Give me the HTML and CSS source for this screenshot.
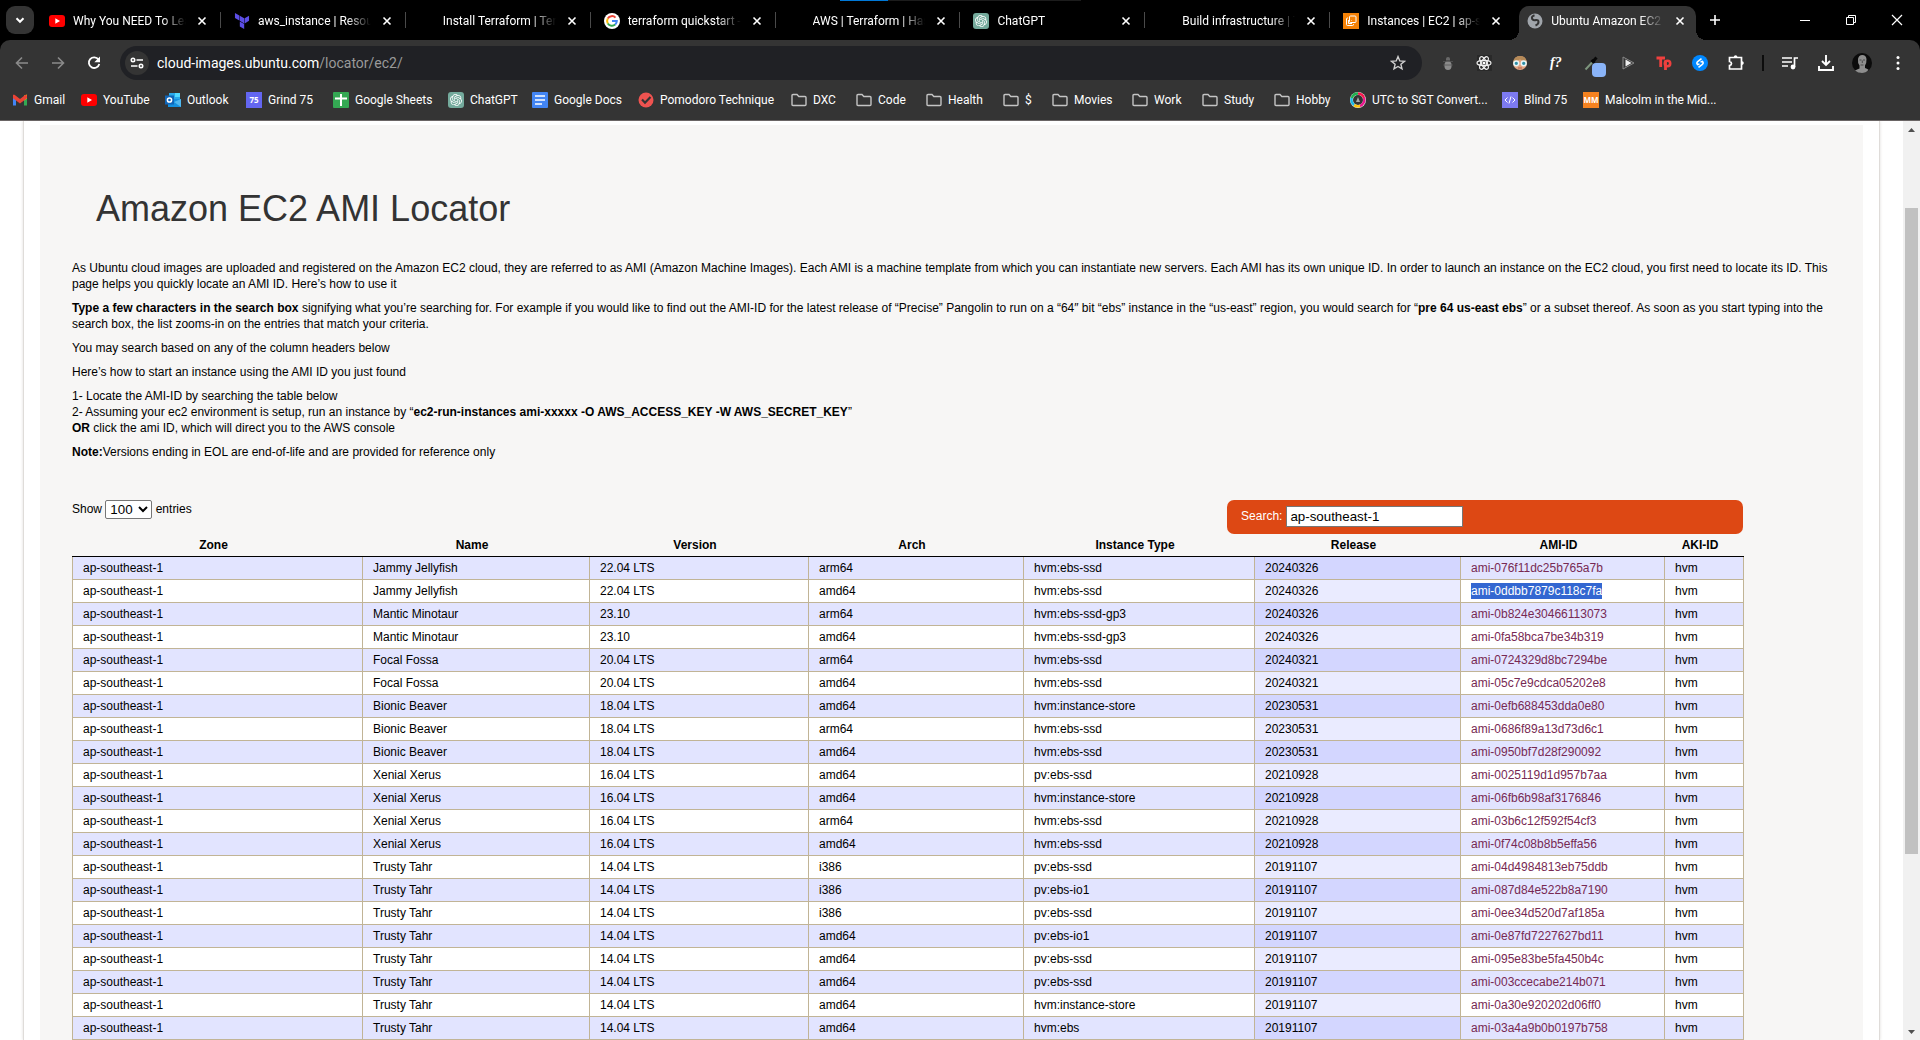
FILE: index.html
```html
<!DOCTYPE html>
<html lang="en">
<head>
<meta charset="utf-8">
<title>Ubuntu Amazon EC2 AMI Locator</title>
<link rel="stylesheet" href="styles.css">
</head>
<body>
<svg class="sprite" aria-hidden="true">
  <symbol id="close" viewBox="0 0 16 16"><path d="M4.5 4.5l7 7M11.500 4.500l-7 7" fill="none" stroke="currentColor" stroke-width="1.600"/></symbol>
  <symbol id="youtube" viewBox="0 0 16 16"><rect y="2" width="16" height="12" rx="3" fill="#f00"/><path d="M6.300 5.300v5.400L11 8z" fill="#fff"/></symbol>
  <symbol id="folder" viewBox="0 0 16 16"><path d="M1 3.500q0-1 1-1h4l1.800 2H14q1 0 1 1v7q0 1-1 1H2q-1 0-1-1z" fill="none" stroke="#c4c4c4" stroke-width="1.400"/></symbol>
  <symbol id="chatgpt" viewBox="0 0 32 32"><rect width="32" height="32" rx="6" fill="#74aa9c"/><path transform="translate(4 4)" fill="#fff" d="M22.2819 9.8211a5.9847 5.9847 0 0 0-.5157-4.9108 6.0462 6.0462 0 0 0-6.5098-2.9A6.0651 6.0651 0 0 0 4.9807 4.1818a5.9847 5.9847 0 0 0-3.9977 2.9 6.0462 6.0462 0 0 0 .7427 7.0966 5.98 5.98 0 0 0 .511 4.9107 6.051 6.051 0 0 0 6.5146 2.9001A5.9847 5.9847 0 0 0 13.2599 24a6.0557 6.0557 0 0 0 5.7718-4.2058 5.9894 5.9894 0 0 0 3.9977-2.9001 6.0557 6.0557 0 0 0-.7475-7.0729zm-9.022 12.6081a4.4755 4.4755 0 0 1-2.8764-1.0408l.1419-.0804 4.7783-2.7582a.7948.7948 0 0 0 .3927-.6813v-6.7369l2.02 1.1686a.071.071 0 0 1 .038.052v5.5826a4.504 4.504 0 0 1-4.4945 4.4944zm-9.6607-4.1254a4.4708 4.4708 0 0 1-.5346-3.0137l.142.0852 4.783 2.7582a.7712.7712 0 0 0 .7806 0l5.8428-3.3685v2.3324a.0804.0804 0 0 1-.0332.0615L9.74 19.9502a4.4992 4.4992 0 0 1-6.1408-1.6464zM2.3408 7.8956a4.485 4.485 0 0 1 2.3655-1.9728V11.6a.7664.7664 0 0 0 .3879.6765l5.8144 3.3543-2.0201 1.1685a.0757.0757 0 0 1-.071 0l-4.8303-2.7865A4.504 4.504 0 0 1 2.3408 7.872zm16.5963 3.8558L13.1038 8.364 15.1192 7.2a.0757.0757 0 0 1 .071 0l4.8303 2.7913a4.4944 4.4944 0 0 1-.6765 8.1042v-5.6772a.79.79 0 0 0-.407-.667zm2.0107-3.0231l-.142-.0852-4.7735-2.7818a.7759.7759 0 0 0-.7854 0L9.409 9.2297V6.8974a.0662.0662 0 0 1 .0284-.0615l4.8303-2.7866a4.4992 4.4992 0 0 1 6.6802 4.66zM8.3065 12.863l-2.02-1.1638a.0804.0804 0 0 1-.038-.0567V6.0742a4.4992 4.4992 0 0 1 7.3757-3.4537l-.142.0805L8.704 5.459a.7948.7948 0 0 0-.3927.6813zm1.0976-2.3654l2.602-1.4998 2.6069 1.4998v2.9994l-2.5974 1.4997-2.6067-1.4997Z"/></symbol>
</svg>

<header class="browser">
  <div class="top-strip"></div>
  <div class="tabstrip">
    <button class="tab-search" aria-label="Search tabs"><svg viewBox="0 0 16 16"><path d="M4.500 6.300L8 9.800l3.500-3.500" fill="none" stroke="#fff" stroke-width="2"/></svg></button>
    <div class="tabs">
      <div class="tab"><svg class="icon"><use href="#youtube"/></svg><span class="tab-title">Why You NEED To Learn Terraform</span><button class="tab-close" aria-label="Close tab"><svg class="icon"><use href="#close"/></svg></button></div>
      <div class="tab"><svg class="icon" viewBox="0 0 24 24"><path fill="#5c4ee5" d="M1.440 0v7.575l6.561 3.790V3.787zm21.120 4.227l-6.561 3.791v7.574l6.560-3.787zM8.720 4.230v7.575l6.561 3.787V8.018zm0 8.405v7.575L15.280 24v-7.578z"/></svg><span class="tab-title">aws_instance | Resources</span><button class="tab-close" aria-label="Close tab"><svg class="icon"><use href="#close"/></svg></button></div>
      <div class="tab"><span class="icon"></span><span class="tab-title">Install Terraform | Terraform</span><button class="tab-close" aria-label="Close tab"><svg class="icon"><use href="#close"/></svg></button></div>
      <div class="tab"><svg class="icon" viewBox="0 0 16 16"><circle cx="8" cy="8" r="8" fill="#fff"/><g fill="none" stroke-width="2"><path d="M11.500 4.600A4.900 4.900 0 0 0 3.800 5.500" stroke="#ea4335"/><path d="M3.800 5.500a4.900 4.900 0 0 0 0 5" stroke="#fbbc05"/><path d="M3.800 10.500a4.900 4.900 0 0 0 7.400 1.100" stroke="#34a853"/><path d="M11.200 11.600A4.900 4.900 0 0 0 12.800 8H8" stroke="#4285f4"/></g></svg><span class="tab-title">terraform quickstart - Google</span><button class="tab-close" aria-label="Close tab"><svg class="icon"><use href="#close"/></svg></button></div>
      <div class="tab"><span class="icon"></span><span class="tab-title">AWS | Terraform | HashiCorp</span><button class="tab-close" aria-label="Close tab"><svg class="icon"><use href="#close"/></svg></button></div>
      <div class="tab"><svg class="icon"><use href="#chatgpt"/></svg><span class="tab-title">ChatGPT</span><button class="tab-close" aria-label="Close tab"><svg class="icon"><use href="#close"/></svg></button></div>
      <div class="tab"><span class="icon"></span><span class="tab-title">Build infrastructure | Terraform</span><button class="tab-close" aria-label="Close tab"><svg class="icon"><use href="#close"/></svg></button></div>
      <div class="tab"><svg class="icon" viewBox="0 0 16 16"><rect width="16" height="16" fill="#f58206"/><g fill="none" stroke="#fff"><rect x="6.500" y="3" width="6.500" height="6.500" rx="1"/><path d="M5 5H4.500q-1 0-1 1v5.500q0 1 1 1H9.500q1 0 1-1V11M8.500 7.500v-.5M5.500 7v3.500h3.500"/></g></svg><span class="tab-title">Instances | EC2 | ap-southeast</span><button class="tab-close" aria-label="Close tab"><svg class="icon"><use href="#close"/></svg></button></div>
      <div class="tab active"><svg class="icon" viewBox="0 0 16 16"><circle cx="8" cy="8" r="7.500" fill="#a0a5ab"/><path d="M7.500 2.200Q4 3.500 5.200 6q1.500 1.700 3.800 1 2.500-.3 2.500 2T8.500 12.500" fill="none" stroke="#343434" stroke-width="2"/></svg><span class="tab-title">Ubuntu Amazon EC2 AMI Finder</span><button class="tab-close" aria-label="Close tab"><svg class="icon"><use href="#close"/></svg></button></div>
    </div>
    <button class="new-tab" aria-label="New tab"><svg class="icon" viewBox="0 0 16 16"><path d="M8 3v10M3 8h10" stroke="#fff" stroke-width="1.600"/></svg></button>
    <div class="window-buttons">
      <button aria-label="Minimize"><svg class="icon" viewBox="0 0 16 16"><path d="M3 8.500h10" stroke="#fff"/></svg></button>
      <button aria-label="Restore"><svg class="icon" viewBox="0 0 16 16"><path d="M3.500 5.500h7v7h-7zM5.500 5.500v-2h7v7h-2" fill="none" stroke="#fff"/></svg></button>
      <button aria-label="Close"><svg class="icon" viewBox="0 0 16 16"><path d="M3 3l10 10M13 3L3 13" stroke="#fff" stroke-width="1.200"/></svg></button>
    </div>
  </div>

  <div class="toolbar">
    <button class="tool" aria-label="Back"><svg class="icon" viewBox="0 0 16 16"><path d="M14 8H3M8 2.500L2.500 8 8 13.500" fill="none" stroke="#8a8a8a" stroke-width="1.600"/></svg></button>
    <button class="tool" aria-label="Forward"><svg class="icon" viewBox="0 0 16 16"><path d="M2 8h11M8 2.500L13.500 8 8 13.500" fill="none" stroke="#8a8a8a" stroke-width="1.600"/></svg></button>
    <button class="tool" aria-label="Reload"><svg class="icon" viewBox="0 0 16 16"><path d="M12.500 4.600A5.300 5.300 0 1 0 13.300 9" fill="none" stroke="#fff" stroke-width="1.800"/><path d="M14 1.500v5.700H8.300z" fill="#fff"/></svg></button>
    <div class="omnibox">
      <button class="site-info" aria-label="Site information"><svg class="icon" viewBox="0 0 16 16"><g fill="none" stroke="#fff" stroke-width="1.600"><circle cx="4" cy="5" r="1.700"/><path d="M7.500 5H14M2 11h6.500"/><circle cx="12" cy="11" r="1.700"/></g></svg></button>
      <a class="url" href="#">cloud-images.ubuntu.com<span>/locator/ec2/</span></a>
      <button class="star" aria-label="Bookmark this tab"><svg class="icon" viewBox="0 0 16 16"><path d="M8 1.600l1.800 4.300 4.700.4-3.600 3 1.100 4.600L8 11.500l-4 2.400 1.100-4.600-3.600-3 4.700-.4z" fill="none" stroke="#d0d0d0" stroke-width="1.400"/></svg></button>
    </div>
    <div class="extensions">
      <button class="tool" aria-label="Bug extension"><svg class="icon" viewBox="0 0 16 16"><path d="M6 4q0-2 2-2t2 2v1.500H6z" fill="#686868"/><ellipse cx="8" cy="10.500" rx="3.600" ry="4.500" fill="#8b8b8b"/><path d="M3 6.500h10M3 10h10" stroke="#555" stroke-width=".8"/></svg></button>
      <button class="tool" aria-label="React tools"><svg class="icon" viewBox="0 0 16 16"><rect x="1" width="15" height="16" fill="#292929"/><g fill="none" stroke="#eee" stroke-width="1.200"><ellipse cx="8" cy="8" rx="7" ry="2.700"/><ellipse cx="8" cy="8" rx="7" ry="2.700" transform="rotate(60 8 8)"/><ellipse cx="8" cy="8" rx="7" ry="2.700" transform="rotate(120 8 8)"/></g><circle cx="8" cy="8" r="1.500" fill="#fff"/></svg></button>
      <button class="tool" aria-label="Glasses extension"><svg class="icon" viewBox="0 0 16 16"><circle cx="8" cy="8" r="7" fill="#e3a481"/><path d="M1.300 7Q2 1 8 1t6.700 6L8 4.500z" fill="#b58a58"/><path d="M6 13h4" stroke="#aa5d50"/><g fill="#2f8ea5" stroke="#e7f5f7" stroke-width="1.500"><circle cx="4.300" cy="8.300" r="2.400"/><circle cx="11.700" cy="8.300" r="2.400"/></g></svg></button>
      <button class="tool" aria-label="WhatFont"><svg class="icon" viewBox="0 0 16 16"><text x="2" y="12" class="glyph-serif">f?</text></svg></button>
      <button class="tool picker" aria-label="Color picker"><svg class="icon" viewBox="0 0 16 16"><path d="M1.500 14.500L9 6.500" stroke="#7d967d" stroke-width="2"/><path d="M7.500 5l3 3M9 6.500L12.500 2.500" stroke="#080808" stroke-width="3"/></svg><span class="picker-badge"></span></button>
      <button class="tool" aria-label="Player extension"><svg class="icon" viewBox="0 0 16 16"><path d="M3 2l11 6-11 6z" fill="none" stroke="#888"/><path d="M5.500 4.500l6 3.500-6 3.500z" fill="#eee"/></svg></button>
      <button class="tool" aria-label="Toptal"><svg class="icon" viewBox="0 0 16 16"><path d="M.5 3H9M4.700 3v9M9.500 5.500V15" fill="none" stroke="#f0403e" stroke-width="2.800"/><circle cx="11.500" cy="8.500" r="2.700" fill="none" stroke="#f0403e" stroke-width="2.600"/></svg></button>
      <button class="tool" aria-label="Shazam"><svg class="icon" viewBox="0 0 16 16"><circle cx="8" cy="8" r="8" fill="#08f"/><path d="M9.500 3.700L6 6.300Q4 8 5.500 9.500L7.500 9M6.500 12.300L10 9.700q2-1.700.5-3.200L8.500 7" fill="none" stroke="#fff" stroke-width="1.600"/></svg></button>
      <button class="tool" aria-label="Extensions"><svg class="icon" viewBox="0 0 16 16"><path d="M1.500 2.500h12v11.500h-12v-3.500q2-.3 2-2t-2-2z" fill="none" stroke="#fff" stroke-width="1.700"/><path d="M5.800 2a1.800 1.800 0 0 1 3.600 0zM14 6.300a1.800 1.800 0 0 1 0 3.600z" fill="#fff"/></svg></button>
      <span class="divider"></span>
      <button class="tool" aria-label="Media controls"><svg class="icon" viewBox="0 0 16 16"><path d="M0 3h10M0 7h10M0 11h6M12.500 12V3H16" fill="none" stroke="#fff" stroke-width="1.700"/><circle cx="11" cy="12" r="2.400" fill="#fff"/></svg></button>
      <button class="tool" aria-label="Downloads"><svg class="icon" viewBox="0 0 16 16"><path d="M8 0v9M4 6l4 4 4-4M1 11v4h14v-4" fill="none" stroke="#fff" stroke-width="1.900"/></svg></button>
      <button class="tool" aria-label="Profile"><svg class="avatar" viewBox="0 0 20 20"><circle cx="10" cy="10" r="10" fill="#0b0b0b"/><path d="M3 17.500q3-1.500 4.500-2v-3Q5.500 10 6 6q.8-4 4.300-4 3.700 0 4.200 4 .2 4-1.500 6.500v2.500q2 .5 3.500 1.800Q14 20 10 20t-7-2.500z" fill="#8e8e8e"/><path d="M7.500 7h2M11 7h2M10.300 7.500v2.500M8.500 12h3" stroke="#4b4b4b"/></svg></button>
      <button class="tool" aria-label="Menu"><svg class="icon" viewBox="0 0 16 16"><g fill="#fff"><circle cx="8" cy="2.500" r="1.500"/><circle cx="8" cy="8" r="1.500"/><circle cx="8" cy="13.500" r="1.500"/></g></svg></button>
    </div>
  </div>

  <nav class="bookmarks" aria-label="Bookmarks">
    <a href="#"><svg class="icon" viewBox="0 0 16 16"><path d="M1 4v9.500h3V6z" fill="#4285f4"/><path d="M15 4v9.500h-3V6z" fill="#34a853"/><path d="M12 3.500l3-1v4l-3 2z" fill="#fbbc04"/><path d="M1 2.800v3.400L8 11.500l7-5.300V3.500l-1.500-.8L8 7 2.500 2.700z" fill="#ea4335"/></svg>Gmail</a>
    <a href="#"><svg class="icon"><use href="#youtube"/></svg>YouTube</a>
    <a href="#"><svg class="icon" viewBox="0 0 16 16"><path d="M4 1h11v7H4z" fill="#28a8ea"/><path d="M10 1h5v4h-5z" fill="#50d9ff"/><path d="M3 7h13v8H3z" fill="#1490df"/><path d="M16 7v8L9 10z" fill="#50b8f0"/><rect y="3.500" width="9" height="9" fill="#0f65b8"/><circle cx="4.500" cy="8" r="2.100" fill="none" stroke="#fff" stroke-width="1.500"/></svg>Outlook</a>
    <a href="#"><svg class="icon" viewBox="0 0 16 16"><rect width="16" height="16" fill="#6366f1"/><text x="8" y="11" class="glyph">75</text></svg>Grind 75</a>
    <a href="#"><svg class="icon" viewBox="0 0 16 16"><rect width="16" height="16" rx="1" fill="#34a853"/><path d="M2 6.500h12M8 2v12" stroke="#fff" stroke-width="2"/></svg>Google Sheets</a>
    <a href="#"><svg class="icon"><use href="#chatgpt"/></svg>ChatGPT</a>
    <a href="#"><svg class="icon" viewBox="0 0 16 16"><rect width="16" height="16" rx="1" fill="#4285f4"/><path d="M3 4h10M3 8h10M3 12h7" stroke="#fff" stroke-width="1.700"/></svg>Google Docs</a>
    <a href="#"><svg class="icon" viewBox="0 0 16 16"><circle cx="8" cy="8" r="7.500" fill="#ef5350"/><path d="M4 7.500l3 3.200L12.500 5" fill="none" stroke="#343434" stroke-width="2.200"/></svg>Pomodoro Technique</a>
    <a href="#"><svg class="icon"><use href="#folder"/></svg>DXC</a>
    <a href="#"><svg class="icon"><use href="#folder"/></svg>Code</a>
    <a href="#"><svg class="icon"><use href="#folder"/></svg>Health</a>
    <a href="#"><svg class="icon"><use href="#folder"/></svg>$</a>
    <a href="#"><svg class="icon"><use href="#folder"/></svg>Movies</a>
    <a href="#"><svg class="icon"><use href="#folder"/></svg>Work</a>
    <a href="#"><svg class="icon"><use href="#folder"/></svg>Study</a>
    <a href="#"><svg class="icon"><use href="#folder"/></svg>Hobby</a>
    <a href="#"><svg class="icon" viewBox="0 0 16 16"><circle cx="8" cy="8" r="8" fill="#e8f0e8"/><circle cx="8" cy="8" r="5" fill="#333"/><g fill="none" stroke-width="2.400"><path d="M8 1.500A6.500 6.500 0 0 1 14 6" stroke="#f7174f"/><path d="M14 6a6.500 6.500 0 0 1-4 8" stroke="#e9158c"/><path d="M10 14a6.500 6.500 0 0 1-6-1" stroke="#ffc107"/><path d="M4 13A6.500 6.500 0 0 1 1.800 6" stroke="#18b8e8"/><path d="M1.800 6A6.500 6.500 0 0 1 8 1.500" stroke="#20b050"/></g><path d="M6 10l2-5 2 5z" fill="#aaa"/></svg>UTC to SGT Convert...</a>
    <a href="#"><svg class="icon" viewBox="0 0 16 16"><rect width="16" height="16" fill="#7d7af0"/><path d="M5.500 5.500L3 8l2.500 2.500M10.500 5.500L13 8l-2.500 2.500M9 4.500l-2 7" fill="none" stroke="#fff"/></svg>Blind 75</a>
    <a href="#"><svg class="icon" viewBox="0 0 16 16"><rect width="16" height="16" fill="#f58220"/><text x="8" y="11" class="glyph">MM</text></svg>Malcolm in the Mid...</a>
  </nav>
</header>

<div class="viewport">
  <main class="sheet">
    <div class="content">
      <h1>Amazon EC2 AMI Locator</h1>
      <p>As Ubuntu cloud images are uploaded and registered on the Amazon EC2 cloud, they are referred to as AMI (Amazon Machine Images). Each AMI is a machine template from which you can instantiate new servers. Each AMI has its own unique ID. In order to launch an instance on the EC2 cloud, you first need to locate its ID. This page helps you quickly locate an AMI ID. Here’s how to use it</p>
      <p><strong>Type a few characters in the search box</strong> signifying what you’re searching for. For example if you would like to find out the AMI-ID for the latest release of “Precise” Pangolin to run on a “64″ bit “ebs” instance in the “us-east” region, you would search for “<strong>pre 64 us-east ebs</strong>” or a subset thereof. As soon as you start typing into the search box, the list zooms-in on the entries that match your criteria.</p>
      <p>You may search based on any of the column headers below</p>
      <p>Here’s how to start an instance using the AMI ID you just found</p>
      <p>1- Locate the AMI-ID by searching the table below<br>2- Assuming your ec2 environment is setup, run an instance by “<strong>ec2-run-instances ami-xxxxx -O AWS_ACCESS_KEY -W AWS_SECRET_KEY</strong>”<br><strong>OR</strong> click the ami ID, which will direct you to the AWS console</p>
      <p><strong>Note:</strong>Versions ending in EOL are end-of-life and are provided for reference only</p>

      <div class="locator">
        <div class="controls">
          <label class="length">Show <select><option>10</option><option>25</option><option>50</option><option selected>100</option></select> entries</label>
          <div class="filter"><label for="search">Search:</label><input id="search" type="text" value="ap-southeast-1"></div>
        </div>
        <table>
          <colgroup><col class="c-zone"><col class="c-name"><col class="c-version"><col class="c-arch"><col class="c-type"><col class="c-release"><col class="c-ami"><col class="c-aki"></colgroup>
          <thead><tr><th>Zone</th><th>Name</th><th>Version</th><th>Arch</th><th>Instance Type</th><th>Release</th><th>AMI-ID</th><th>AKI-ID</th></tr></thead>
          <tbody>
            <tr><td>ap-southeast-1</td><td>Jammy Jellyfish</td><td>22.04 LTS</td><td>arm64</td><td>hvm:ebs-ssd</td><td>20240326</td><td><a href="#">ami-076f11dc25b765a7b</a></td><td>hvm</td></tr>
            <tr><td>ap-southeast-1</td><td>Jammy Jellyfish</td><td>22.04 LTS</td><td>amd64</td><td>hvm:ebs-ssd</td><td>20240326</td><td><a href="#" class="selected">ami-0ddbb7879c118c7fa</a></td><td>hvm</td></tr>
            <tr><td>ap-southeast-1</td><td>Mantic Minotaur</td><td>23.10</td><td>arm64</td><td>hvm:ebs-ssd-gp3</td><td>20240326</td><td><a href="#">ami-0b824e30466113073</a></td><td>hvm</td></tr>
            <tr><td>ap-southeast-1</td><td>Mantic Minotaur</td><td>23.10</td><td>amd64</td><td>hvm:ebs-ssd-gp3</td><td>20240326</td><td><a href="#">ami-0fa58bca7be34b319</a></td><td>hvm</td></tr>
            <tr><td>ap-southeast-1</td><td>Focal Fossa</td><td>20.04 LTS</td><td>arm64</td><td>hvm:ebs-ssd</td><td>20240321</td><td><a href="#">ami-0724329d8bc7294be</a></td><td>hvm</td></tr>
            <tr><td>ap-southeast-1</td><td>Focal Fossa</td><td>20.04 LTS</td><td>amd64</td><td>hvm:ebs-ssd</td><td>20240321</td><td><a href="#">ami-05c7e9cdca05202e8</a></td><td>hvm</td></tr>
            <tr><td>ap-southeast-1</td><td>Bionic Beaver</td><td>18.04 LTS</td><td>amd64</td><td>hvm:instance-store</td><td>20230531</td><td><a href="#">ami-0efb688453dda0e80</a></td><td>hvm</td></tr>
            <tr><td>ap-southeast-1</td><td>Bionic Beaver</td><td>18.04 LTS</td><td>arm64</td><td>hvm:ebs-ssd</td><td>20230531</td><td><a href="#">ami-0686f89a13d73d6c1</a></td><td>hvm</td></tr>
            <tr><td>ap-southeast-1</td><td>Bionic Beaver</td><td>18.04 LTS</td><td>amd64</td><td>hvm:ebs-ssd</td><td>20230531</td><td><a href="#">ami-0950bf7d28f290092</a></td><td>hvm</td></tr>
            <tr><td>ap-southeast-1</td><td>Xenial Xerus</td><td>16.04 LTS</td><td>amd64</td><td>pv:ebs-ssd</td><td>20210928</td><td><a href="#">ami-0025119d1d957b7aa</a></td><td>hvm</td></tr>
            <tr><td>ap-southeast-1</td><td>Xenial Xerus</td><td>16.04 LTS</td><td>amd64</td><td>hvm:instance-store</td><td>20210928</td><td><a href="#">ami-06fb6b98af3176846</a></td><td>hvm</td></tr>
            <tr><td>ap-southeast-1</td><td>Xenial Xerus</td><td>16.04 LTS</td><td>arm64</td><td>hvm:ebs-ssd</td><td>20210928</td><td><a href="#">ami-03b6c12f592f54cf3</a></td><td>hvm</td></tr>
            <tr><td>ap-southeast-1</td><td>Xenial Xerus</td><td>16.04 LTS</td><td>amd64</td><td>hvm:ebs-ssd</td><td>20210928</td><td><a href="#">ami-0f74c08b8b5effa56</a></td><td>hvm</td></tr>
            <tr><td>ap-southeast-1</td><td>Trusty Tahr</td><td>14.04 LTS</td><td>i386</td><td>pv:ebs-ssd</td><td>20191107</td><td><a href="#">ami-04d4984813eb75ddb</a></td><td>hvm</td></tr>
            <tr><td>ap-southeast-1</td><td>Trusty Tahr</td><td>14.04 LTS</td><td>i386</td><td>pv:ebs-io1</td><td>20191107</td><td><a href="#">ami-087d84e522b8a7190</a></td><td>hvm</td></tr>
            <tr><td>ap-southeast-1</td><td>Trusty Tahr</td><td>14.04 LTS</td><td>i386</td><td>pv:ebs-ssd</td><td>20191107</td><td><a href="#">ami-0ee34d520d7af185a</a></td><td>hvm</td></tr>
            <tr><td>ap-southeast-1</td><td>Trusty Tahr</td><td>14.04 LTS</td><td>amd64</td><td>pv:ebs-io1</td><td>20191107</td><td><a href="#">ami-0e87fd7227627bd11</a></td><td>hvm</td></tr>
            <tr><td>ap-southeast-1</td><td>Trusty Tahr</td><td>14.04 LTS</td><td>amd64</td><td>pv:ebs-ssd</td><td>20191107</td><td><a href="#">ami-095e83be5fa450b4c</a></td><td>hvm</td></tr>
            <tr><td>ap-southeast-1</td><td>Trusty Tahr</td><td>14.04 LTS</td><td>amd64</td><td>pv:ebs-ssd</td><td>20191107</td><td><a href="#">ami-003ccecabe214b071</a></td><td>hvm</td></tr>
            <tr><td>ap-southeast-1</td><td>Trusty Tahr</td><td>14.04 LTS</td><td>amd64</td><td>hvm:instance-store</td><td>20191107</td><td><a href="#">ami-0a30e920202d06ff0</a></td><td>hvm</td></tr>
            <tr><td>ap-southeast-1</td><td>Trusty Tahr</td><td>14.04 LTS</td><td>amd64</td><td>hvm:ebs</td><td>20191107</td><td><a href="#">ami-03a4a9b0b0197b758</a></td><td>hvm</td></tr>
          </tbody>
        </table>
      </div>
    </div>
  </main>
  <div class="scrollbar" aria-hidden="true">
    <svg class="arrow" viewBox="0 0 17 17"><path d="M5 11h7L8.500 7z" fill="#505050"/></svg>
    <span class="space-above"></span>
    <span class="thumb"></span>
    <span class="space-below"></span>
    <svg class="arrow" viewBox="0 0 17 17"><path d="M5 7h7L8.500 11z" fill="#505050"/></svg>
  </div>
</div>
</body>
</html>
```
FILE: styles.css
```css
* { box-sizing: border-box; }

body {
  margin: 0;
  height: 100vh;
  display: flex;
  flex-direction: column;
  overflow: hidden;
  background: #fff;
  font: 12px/16px "Liberation Sans", Arial, sans-serif;
  color: #000;
}

.sprite { position: absolute; width: 0; height: 0; }
.icon { display: block; flex: none; width: 16px; height: 16px; }

button { border: 0; padding: 0; background: none; color: inherit; font: inherit; }

/* Browser frame */
.browser {
  position: relative;
  flex: none;
  background: #000;
  border-bottom: 1px solid #6a6565;
  font-family: Roboto, "Noto Sans", sans-serif;
  color: #fff;
}

.top-strip {
  position: absolute;
  top: 0;
  left: 840px;
  width: 241px;
  height: 1px;
  background: linear-gradient(to right, #0078d7 48px, #1c1c1c 48px);
}

.tabstrip { display: flex; height: 40px; padding-left: 6px; }

.tab-search {
  flex: none;
  width: 28px;
  height: 28px;
  margin: 6px 2px 0 0;
  border-radius: 9px;
  background: #343434;
}
.tab-search svg { display: block; width: 16px; margin: 0 auto; }

.tabs { display: flex; flex: 0 1 1664px; min-width: 0; }

.tab {
  position: relative;
  flex: 1 1 0;
  min-width: 0;
  display: flex;
  align-items: center;
  gap: 8px;
  padding: 2px 11px 0 13px;
}
.tab:not(.active)::after {
  content: "";
  position: absolute;
  right: 0;
  top: 12px;
  width: 1px;
  height: 16px;
  background: #4a4a4a;
}
.tab:nth-last-child(2)::after { display: none; }

.tab.active {
  margin: 6px 4px 0;
  padding: 0 8px 5px;
  border-radius: 10px 10px 0 0;
  background: #343434;
}
.tab.active::before,
.tab.active::after {
  content: "";
  position: absolute;
  bottom: 0;
  width: 10px;
  height: 10px;
}
.tab.active::before { left: -10px; background: radial-gradient(circle at 0 0, transparent 10px, #343434 10px); }
.tab.active::after { right: -10px; background: radial-gradient(circle at 100% 0, transparent 10px, #343434 10px); }

.tab-title {
  flex: 1 1 0;
  min-width: 0;
  overflow: hidden;
  white-space: nowrap;
  line-height: 20px;
  mask-image: linear-gradient(to right, #000 calc(100% - 24px), transparent);
}

.new-tab { flex: none; width: 28px; margin-left: 1px; }
.new-tab .icon { margin: 0 auto; }

.window-buttons { display: flex; margin-left: auto; }
.window-buttons button { width: 46px; }
.window-buttons .icon { margin: 0 auto; }

.toolbar {
  display: flex;
  padding: 6px 4px 0;
  background: #343434;
  border-radius: 10px 10px 0 0;
}
.tool {
  flex: none;
  display: flex;
  align-items: center;
  justify-content: center;
  width: 36px;
  height: 34px;
}

.omnibox {
  flex: 1 1 0;
  min-width: 0;
  display: flex;
  align-items: center;
  gap: 8px;
  margin: 0 8px;
  padding: 0 16px 0 5px;
  border-radius: 17px;
  background: #202125;
}
.site-info {
  display: flex;
  align-items: center;
  justify-content: center;
  width: 24px;
  height: 24px;
  border-radius: 50%;
  background: #343434;
}
.url { flex: 1; font-size: 14px; line-height: 20px; color: #fff; text-decoration: none; }
.url span { color: #9a9a9a; }

.extensions { display: flex; }
.picker { position: relative; }
.picker-badge {
  position: absolute;
  right: 4px;
  bottom: 3px;
  width: 14px;
  height: 14px;
  border-radius: 4px;
  background: #8ab4f8;
}
.divider { width: 2px; margin: 9px 8px; background: #0c0c0c; }
.avatar { width: 20px; height: 20px; }

.bookmarks {
  display: grid;
  grid-template-columns: 69px 84px 81px 87px 115px 84px 106px 153px 65px 70px 77px 49px 80px 70px 72px 76px 152px 81px auto;
  align-items: center;
  height: 40px;
  padding-left: 12px;
  background: #343434;
}
.bookmarks a {
  display: flex;
  align-items: center;
  gap: 6px;
  color: #fff;
  text-decoration: none;
  white-space: nowrap;
}

.glyph { font: bold 8px "Open Sans", sans-serif; fill: #fff; text-anchor: middle; }
.glyph-serif { font: italic bold 14px "Liberation Serif", serif; fill: #fff; }

/* Page */
.viewport { flex: 1 1 0; min-height: 0; display: flex; }

.sheet {
  flex: 1 1 0;
  min-width: 0;
  margin: 0 23px;
  padding: 4px 16px 0;
  border: solid #dfdcd9;
  border-width: 0 1px;
  overflow: hidden;
  box-shadow: 0 0 3px #dfdcd9;
}

.content { padding: 62px 32px 32px; background: #f7f6f5; }

h1 { margin: 0 0 29px 24px; font-size: 36px; line-height: 44px; font-weight: normal; color: #333; }
p { margin: 0 0 8px; }

.locator { width: 95%; margin-top: 40px; }
.controls { display: flex; justify-content: space-between; align-items: flex-start; }

.length select {
  width: 47px;
  height: 19px;
  border: 1px solid #767676;
  border-radius: 2px;
  background: #fff;
  font-family: inherit;
  vertical-align: middle;
}

.filter {
  display: flex;
  align-items: center;
  gap: 4px;
  width: 516px;
  height: 34px;
  padding: 0 14px 2px;
  border-radius: 7px;
  background: #dd4814;
  color: #fff;
}
.filter input {
  width: 177px;
  height: 21px;
  padding: 1px 3px;
  border: 1px solid #767676;
  font-family: inherit;
}

table { width: 100%; table-layout: fixed; border-collapse: collapse; }
.c-zone { width: 290px; }
.c-name { width: 227px; }
.c-version { width: 219px; }
.c-arch { width: 215px; }
.c-type { width: 231px; }
.c-release { width: 206px; }
.c-ami { width: 204px; }
.c-aki { width: 79px; }

th { height: 22px; padding: 3px 18px 3px 10px; border-bottom: 1px solid #000; }
td { height: 23px; padding: 3px 10px; border: 1px solid #c1b496; }
tbody tr:first-child td { border-top-color: #000; }

tbody tr { background: #fff; }
tbody tr:nth-child(odd) { background: #e2e4ff; }
td:nth-child(6) { background: #eaebff; }
tr:nth-child(odd) td:nth-child(6) { background: #d3d6ff; }

td a { color: #772953; text-decoration: none; }
td .selected { display: inline-block; background: #3367d1; color: #fff; }

.scrollbar { flex: none; display: flex; flex-direction: column; width: 17px; background: #f1f1f1; }
.arrow { flex: none; width: 17px; height: 17px; }
.thumb { flex: 646; margin: 0 2px; background: #c1c1c1; }
.space-above { flex: 70; }
.space-below { flex: 169; }
```
